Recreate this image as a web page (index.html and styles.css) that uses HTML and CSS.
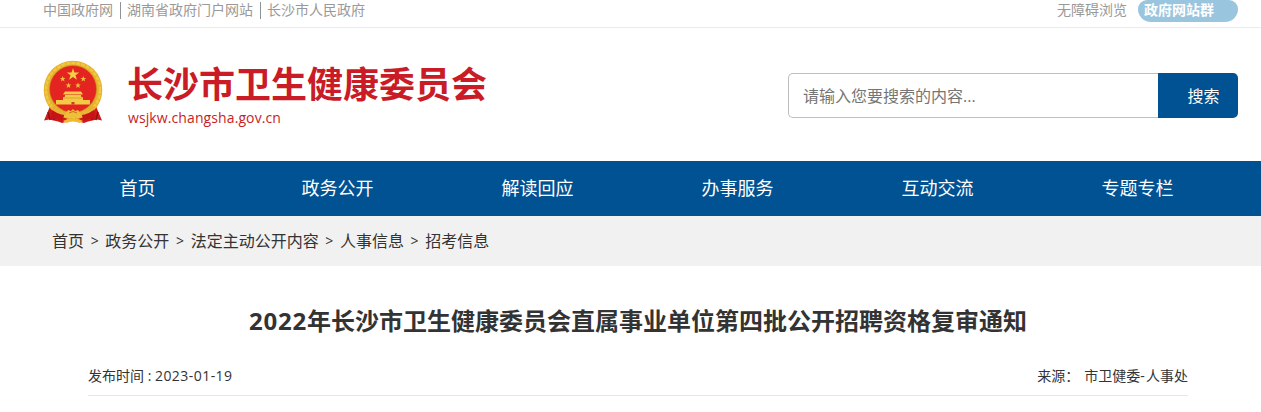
FILE: index.html
```html
<!DOCTYPE html>
<html lang="zh-CN">
<head>
<meta charset="utf-8">
<title>2022年长沙市卫生健康委员会直属事业单位第四批公开招聘资格复审通知</title>
<link rel="stylesheet" href="styles.css">
</head>
<body>
<div class="topbar">
  <div class="container topbar-inner">
    <div class="top-links"><a>中国政府网</a><i class="divider"></i><a>湖南省政府门户网站</a><i class="divider"></i><a>长沙市人民政府</a></div>
    <div class="top-tools"><a>无障碍浏览</a><a class="site-group">政府网站群</a></div>
  </div>
</div>
<header class="container header">
  <svg class="emblem" viewBox="0 0 60 64" width="60" height="64">
    <path d="M8 44L1 60.500l5-1 9 2 4 1.500 11-3 11 3 4-1.500 9-2 5 1L52 44z" fill="#d01a17"/>
    <path d="M5 52l2 8M12 53l-1 7M55 52l-2 8M48 53l1 7" stroke="#8d0f12" stroke-width="1.300" fill="none"/>
    <circle cx="30" cy="30" r="29.300" fill="#e5b02c"/>
    <circle cx="30" cy="30" r="27" fill="none" stroke="#f0c740" stroke-width="2.600" stroke-dasharray="4 1"/>
    <circle cx="30" cy="29" r="23.500" fill="#e32420" stroke="#c98a18" stroke-width=".6"/>
    <path d="M30 8.200l1.500 4.200h4.700l-3.700 2.800 1.400 4.500-3.900-2.700-3.900 2.700 1.400-4.500-3.700-2.800h4.700z" fill="#f2cf45"/>
    <g fill="#eebf3c">
      <path d="M19.700 16l.8 2h2.100l-1.700 1.300.6 2.100-1.800-1.200-1.800 1.200.6-2.100-1.700-1.300h2.100z"/>
      <path d="M40.300 16l.8 2h2.100l-1.700 1.300.6 2.100-1.800-1.200-1.800 1.200.6-2.100-1.700-1.300h2.100z"/>
      <path d="M25.500 22.500l.8 2h2.100l-1.700 1.300.6 2.100-1.800-1.200-1.800 1.200.6-2.100-1.700-1.300h2.100z"/>
      <path d="M35 22.500l.8 2h2.100l-1.700 1.300.6 2.100-1.800-1.200-1.800 1.200.6-2.100-1.700-1.300h2.100z"/>
    </g>
    <path d="M22 31.500h16l2 3H20zM22 35h16v1.500l2 1v2.500h7v4.500H13V40h7v-2.500l2-1z" fill="#f3ca47"/>
    <path d="M21 38h18" stroke="#d9982a" stroke-width=".8"/>
    <path d="M28.500 44.500v-2.500h3v2.500z" fill="#d33a20"/>
    <path d="M10 47.500q6 5 12 5.500l-3 8-6-3-6 2zM50 47.500q-6 5-12 5.500l3 8 6-3 6 2z" fill="#c71217"/>
    <path d="M8 47q6 6 15 7M52 47q-6 6-15 7" fill="none" stroke="#e9b436" stroke-width="2.500"/>
    <path d="M23 53l2-3 3 1 2-2 2 2 3-1 2 3 1 4-3 1-2-2-3 2-3-2-2 2-3-1z" fill="#f0bf37"/>
    <path d="M26 53q4-3 8 0" fill="none" stroke="#bd7721"/>
    <path d="M20 61q10-6 20 0l-3 2q-7-3-14 0z" fill="#efb932"/>
  </svg>
  <div class="brand">
    <h1>长沙市卫生健康委员会</h1>
    <p>wsjkw.changsha.gov.cn</p>
  </div>
  <form class="search">
    <input type="text" placeholder="请输入您要搜索的内容...">
    <button type="button">搜索</button>
  </form>
</header>
<nav class="nav">
  <div class="container nav-inner"><a>首页</a><a>政务公开</a><a>解读回应</a><a>办事服务</a><a>互动交流</a><a>专题专栏</a></div>
</nav>
<div class="crumbs">
  <div class="container crumbs-inner"><a>首页</a><b>&gt;</b><a>政务公开</a><b>&gt;</b><a>法定主动公开内容</a><b>&gt;</b><a>人事信息</a><b>&gt;</b><a>招考信息</a></div>
</div>
<main class="article">
  <h2><span class="year">2022</span>年长沙市卫生健康委员会直属事业单位第四批公开招聘资格复审通知</h2>
  <div class="meta">
    <span>发布时间 : <span class="date">2023-01-19</span></span>
    <span class="source"><span>来源：</span><span>市卫健委<span class="dash">-</span>人事处</span></span>
  </div>
</main>
</body>
</html>
```

FILE: styles.css
```css
* { box-sizing: border-box; }
body {
  margin: 0;
  background: #fff;
  color: #333;
  font-family: "Open Sans", "Noto Sans CJK SC", sans-serif;
  font-size: 14px;
}
h1, h2, p { margin: 0; }
.container { width: 1200px; margin-left: 38px; }
.topbar { height: 28px; border-bottom: 1px solid #ebebeb; color: #999; }
.topbar-inner { display: flex; justify-content: space-between; height: 22px; line-height: 20px; }
.top-links { display: flex; padding-left: 5px; }
.divider { width: 1px; height: 17px; margin: 2px 6px 0 7px; background: #8e9299; }
.top-tools { display: flex; gap: 11px; }
.site-group {
  width: 100px;
  height: 22px;
  padding-left: 6px;
  border-radius: 9px 9px 13px 13px / 9px 9px 13px 13px;
  background: #9ac5de;
  color: #fff;
  font-weight: bold;
}
.header { display: flex; height: 133px; padding-left: 5px; }
.emblem { margin-top: 32px; flex: none; }
.brand { margin: 33px 0 0 24px; color: #c91c26; }
.brand h1 { font-size: 36px; line-height: 48px; }
.brand p { padding-left: 1px; font-size: 14px; line-height: 18px; letter-spacing: 0.1px; }
.search { display: flex; width: 450px; height: 45px; margin: 45px 0 0 auto; }
.search input {
  width: 370px;
  height: 45px;
  padding: 0 15px 0 14px;
  border: 1px solid #bfbfbf;
  border-right: 0;
  border-radius: 5px 0 0 5px;
  font: inherit;
  font-size: 16px;
}
.search input::placeholder { color: #757575; }
.search button {
  width: 80px;
  padding: 0 0 1px 11px;
  border: 0;
  border-radius: 0 5px 5px 0;
  background: #005293;
  color: #fff;
  font: inherit;
  font-size: 16px;
}
.nav { height: 55px; background: #005293; }
.nav-inner { display: flex; }
.nav-inner a { width: 200px; padding-right: 1px; text-align: center; color: #fff; font-size: 18px; line-height: 55px; }
.crumbs { height: 50px; background: #f1f1f1; }
.crumbs-inner { display: flex; padding-left: 14px; font-size: 16px; line-height: 50px; }
.crumbs-inner b { width: 21.3px; text-align: center; font-size: 14px; font-weight: normal; }
.article { width: 1100px; margin-left: 88px; }
.article h2 { padding-top: 37px; font-size: 24px; line-height: 36px; text-align: center; white-space: nowrap; }
.year { letter-spacing: 0.8px; }
.meta { display: flex; justify-content: space-between; height: 57px; padding-top: 27px; line-height: 20px; border-bottom: 1px solid #e6e6e6; }
.date { letter-spacing: 0.45px; }
.dash { letter-spacing: 1.2px; }
.source { display: flex; gap: 5px; }
```
